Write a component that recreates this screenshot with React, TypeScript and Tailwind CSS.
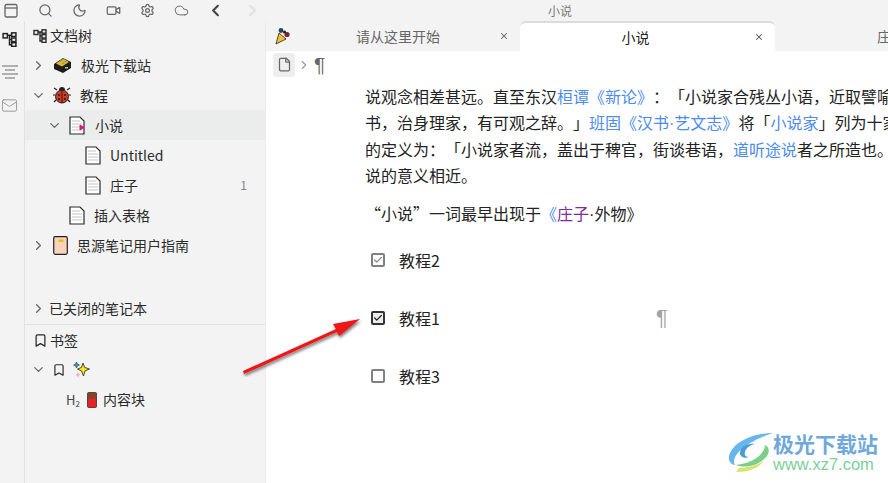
import React from 'react';
import { Search, Moon, Video, Settings, Cloud, ChevronLeft, ChevronRight, ChevronDown, Bookmark, X, Mail, Check, File } from 'lucide-react';

const Tree = ({ size = 14 }: { size?: number }) => (
  <svg width={size} height={size} viewBox="0 0 14 14" fill="none" stroke="currentColor" strokeWidth="1.4">
    <rect x="1" y="1.5" width="4" height="4" />
    <rect x="9" y="0.8" width="4" height="3.4" />
    <rect x="9" y="5.6" width="4" height="3.4" />
    <rect x="9" y="10" width="4" height="3.4" />
    <path d="M5 3h4M7 3v9h2M7 7h2" />
  </svg>
);

const Outline = () => (
  <svg width="16" height="16" viewBox="0 0 16 16" stroke="#9a9a9a" strokeWidth="1.3">
    <path d="M0 2h16M3 6h10M0 10h16M3 14h10" />
  </svg>
);

const CalendarIcon = () => (
  <svg width="14" height="15" viewBox="0 0 14 15" fill="none" stroke="#666" strokeWidth="1.3">
    <rect x="1" y="1.5" width="12" height="12.5" rx="1.5" />
    <path d="M1 5h12" />
  </svg>
);

const DocIcon = ({ mark }: { mark?: boolean }) => (
  <svg width="16" height="19" viewBox="0 0 16 19">
    <path d="M1 1h10l4 4v13H1z" fill="#fff" stroke="#2b2b2b" strokeWidth="1.2" />
    <path d="M3 5h8M3 8h10M3 11h10M3 14h10" stroke="#c4c4c4" strokeWidth="1.2" />
    {mark && <path d="M11 9l4 2.5-4 2.5z" fill="#e0157d" stroke="#e0157d" />}
  </svg>
);

const BoxIcon = () => (
  <svg width="19" height="18" viewBox="0 0 19 18">
    <path d="M1 8l9-6 8 4v6l-8 5-9-4z" fill="#1d1d1d" />
    <path d="M3 7.5l7-5 6 3.5-7 4.5z" fill="#f0b52a" />
    <path d="M6 6l5-3M9 8l4-3" stroke="#5aa85a" strokeWidth="1" />
    <rect x="12" y="11" width="3" height="1.5" fill="#bbb" />
  </svg>
);

const BugIcon = () => (
  <svg width="18" height="18" viewBox="0 0 18 18">
    <path d="M4 4L1 2M14 4l3-2M2 9H0M16 9h2M3 14l-2 2M15 14l2 2" stroke="#222" strokeWidth="1.2" />
    <circle cx="9" cy="4" r="3" fill="#222" />
    <ellipse cx="9" cy="10.5" rx="6.5" ry="6.5" fill="#d63a1e" stroke="#222" />
    <path d="M9 4v13" stroke="#222" />
    <circle cx="6" cy="9" r="1.1" fill="#222" />
    <circle cx="12" cy="9" r="1.1" fill="#222" />
    <circle cx="6" cy="13" r="1.1" fill="#222" />
    <circle cx="12" cy="13" r="1.1" fill="#222" />
  </svg>
);

const BookIcon = () => (
  <svg width="15" height="19" viewBox="0 0 15 19">
    <rect x="0.7" y="0.7" width="13.6" height="17.6" rx="1.5" fill="#f7d3bb" stroke="#222" strokeWidth="1.2" />
    <rect x="5.5" y="3.5" width="5" height="2.5" rx="1" fill="#e9bf1c" />
  </svg>
);

const SparkleIcon = () => (
  <svg width="17" height="17" viewBox="0 0 17 17">
    <path d="M10 2l1.6 4.4L16.5 8l-4.4 1.8L10.5 15l-2-5L4.5 8l4-1.6z" fill="#f8e71c" stroke="#222" strokeWidth="0.8" />
    <path d="M3.5 1l1 2 2 1-2 1-1 2-1-2-2-1 2-1z" fill="#2d9fc4" stroke="#222" strokeWidth="0.5" />
    <path d="M5 11l.8 2 1.7.8-1.7.8L5 17l-.8-2.4-1.7-.8 1.7-.8z" fill="#f4a3c0" />
  </svg>
);

const ChocoIcon = () => (
  <svg width="10" height="16" viewBox="0 0 10 16">
    <rect x="0.5" y="0.5" width="9" height="15" rx="1" fill="#e8202a" stroke="#222" strokeWidth="0.7" />
    <path d="M1 1h8v5L1 7z" fill="#7a4a2a" />
  </svg>
);

const PopperIcon = () => (
  <svg width="16" height="18" viewBox="0 0 16 18">
    <path d="M1 17l3-11 7 6z" fill="#f2c230" stroke="#222" strokeWidth="0.8" />
    <circle cx="6" cy="3.5" r="2.4" fill="#1f4a5e" />
    <circle cx="12" cy="7.5" r="2.6" fill="#7a2230" />
    <circle cx="9.5" cy="5" r="1.6" fill="#222" />
  </svg>
);

const Arrow = () => (
  <svg className="absolute left-[240px] top-[315px]" width="125" height="62" viewBox="0 0 125 62">
    <defs>
      <filter id="arrowShadow" x="-20%" y="-30%" width="140%" height="170%">
        <feDropShadow dx="1" dy="2" stdDeviation="1.5" floodColor="#000" floodOpacity="0.55" />
      </filter>
    </defs>
    <path d="M3 56L96 14l-3-5 27-5-21 17-2-4L4 59z" fill="#ee1414" filter="url(#arrowShadow)" />
  </svg>
);

const Watermark = () => (
  <div className="absolute left-[728px] top-[431px] flex items-center">
    <svg width="45" height="42" viewBox="0 0 45 42" fill="none">
      <path d="M45 2C28 2 8 9 2 22c-3 6 0 11 5 12C2 26 16 11 45 2z" fill="#67b7ea" />
      <path d="M8 34c10 4 24 0 31-9 3-5 2-9-2-11 0 7-9 18-29 20z" fill="#7ccf8a" />
      <path d="M8 41c11 0 22-3 28-11-7 4-16 7-25 7z" fill="#d9e36b" />
      <path d="M27 13c-8-1-15 3-15 9 0 4 5 6 9 4-3 0-5-2-4-5 1-4 5-7 10-8z" fill="#4a9ed8" />
    </svg>
    <div className="flex flex-col">
      <span className="text-[21px] leading-[24px] font-bold text-[#6fa8dc]">极光下载站</span>
      <span className="text-[16.5px] leading-[18px] [font-family:'Liberation_Sans',sans-serif] text-[#7ccf9a]">www.xz7.com</span>
    </div>
  </div>
);

const Row = ({ indent, open, arrow = true, icon, label, badge, active, gap = 'gap-[11px]' }: { indent: number; open?: boolean; arrow?: boolean; icon: React.ReactNode; label: string; badge?: string; active?: boolean; gap?: string }) => (
  <div className={`flex h-[30px] items-center pr-[18px] ${active ? 'bg-[#ebecec]' : ''}`} style={{ paddingLeft: indent }}>
    <span className="flex w-[18px] shrink-0 justify-center text-[#6b6b6b]">
      {arrow && (open ? <ChevronDown size={15} strokeWidth={2.2} /> : <ChevronRight size={15} strokeWidth={2.2} />)}
    </span>
    <span className={`ml-[6px] flex items-center ${gap}`}>
      {icon}
      <span>{label}</span>
    </span>
    {badge && <span className="ml-auto text-[12px] text-[#7d8590]">{badge}</span>}
  </div>
);

const Pilcrow = ({ className }: { className: string }) => (
  <span className={`leading-none [font-family:'Liberation_Sans',sans-serif] ${className}`}>¶</span>
);

const Task = ({ checked, strong, label, mark }: { checked?: boolean; strong?: boolean; label: string; mark?: boolean }) => (
  <div className="flex h-[58px] items-center">
    <span className={`ml-[6px] flex h-[14px] w-[14px] items-center justify-center rounded-[2px] border-2 ${strong ? 'border-[#333] bg-[#ececec]' : 'border-[#808080]'}`}>
      {checked && <Check size={10} strokeWidth={3} className={strong ? 'text-[#222]' : 'text-[#888]'} />}
    </span>
    <span className="ml-[14px]">{label}</span>
    {mark && <Pilcrow className="ml-[216px] text-[22px] text-[#a3a3a3]" />}
  </div>
);

const A = ({ children }: { children: React.ReactNode }) => <span className="text-[#4d8bf0]">{children}</span>;
const Dot = () => <span className="[font-family:'Liberation_Sans',sans-serif]">·</span>;

export default function App() {
  return (
    <div className="relative flex h-[483px] w-[888px] flex-col overflow-hidden bg-[#f3f3f3] text-[#222] [font-family:'Noto_Sans_CJK_SC','Liberation_Sans',sans-serif]">
      <div className="relative flex h-[21px] shrink-0 items-center text-[#666]">
        <div className="flex w-[22px] justify-center"><CalendarIcon /></div>
        <div className="flex items-center gap-[19px] pl-[16px]">
          <Search size={15} strokeWidth={2} />
          <Moon size={15} strokeWidth={2} />
          <Video size={15} strokeWidth={2} />
          <Settings size={15} strokeWidth={2} />
          <Cloud size={15} strokeWidth={1.5} />
          <ChevronLeft size={19} strokeWidth={2.6} className="-ml-[2px] text-[#444]" />
          <ChevronRight size={19} strokeWidth={2.6} className="-ml-[1px] text-[#e2e2e2]" />
        </div>
        <span className="absolute left-[548px] text-[12px] text-[#777]">小说</span>
      </div>

      <div className="flex min-h-0 flex-1">
        <div className="flex w-[25px] shrink-0 flex-col items-center gap-[17px] border-r border-[#e2e2e2] pt-[11px] pr-[5px]">
          <span className="text-[#222]"><Tree size={15} /></span>
          <Outline />
          <Mail size={17} strokeWidth={1.4} className="text-[#9a9a9a]" />
        </div>

        <div className="flex w-[241px] shrink-0 flex-col border-r border-[#ececec] text-[14px] text-[#2b2b2b]">
          <div className="flex h-[29px] shrink-0 items-center gap-[3px] pl-[8px]">
            <Tree />
            <span>文档树</span>
          </div>
          <Row indent={4} icon={<BoxIcon />} label="极光下载站" gap="gap-[9px]" />
          <Row indent={4} open icon={<BugIcon />} label="教程" gap="gap-[9px]" />
          <Row indent={20} open active icon={<DocIcon mark />} label="小说" gap="gap-[10px]" />
          <Row indent={36} arrow={false} icon={<DocIcon />} label="Untitled" gap="gap-[9px]" />
          <Row indent={36} arrow={false} icon={<DocIcon />} label="庄子" badge="1" gap="gap-[9px]" />
          <Row indent={20} arrow={false} icon={<DocIcon />} label="插入表格" gap="gap-[9px]" />
          <Row indent={4} icon={<BookIcon />} label="思源笔记用户指南" gap="gap-[9px]" />
          <div className="h-[34px] shrink-0" />
          <div className="flex h-[31px] shrink-0 items-center gap-[2px] border-b border-[#e2e2e2] pb-[1px] pl-[4px]">
            <span className="flex w-[18px] justify-center text-[#6b6b6b]"><ChevronRight size={15} strokeWidth={2.2} /></span>
            <span>已关闭的笔记本</span>
          </div>
          <div className="flex h-[30px] shrink-0 items-center gap-[2px] pl-[8px]">
            <Bookmark size={15} strokeWidth={2} />
            <span>书签</span>
          </div>
          <div className="flex h-[29px] shrink-0 items-center pl-[4px]">
            <span className="flex w-[18px] justify-center text-[#6b6b6b]"><ChevronDown size={15} strokeWidth={2.2} /></span>
            <Bookmark size={14} strokeWidth={2} className="ml-[5px]" />
            <span className="ml-[7px]"><SparkleIcon /></span>
          </div>
          <div className="flex h-[31px] shrink-0 items-center pl-[41px]">
            <span className="text-[13px] text-[#444]">H<sub className="text-[8px]">2</sub></span>
            <span className="ml-[7px]"><ChocoIcon /></span>
            <span className="ml-[6px]">内容块</span>
          </div>
        </div>

        <div className="flex min-w-0 flex-1 flex-col">
          <div className="flex h-[30px] shrink-0 items-stretch whitespace-nowrap text-[14px] text-[#666]">
            <div className="relative flex w-[254px] shrink-0 items-center justify-center">
              <span className="absolute left-[9px]"><PopperIcon /></span>
              <span className="ml-[10px]">请从这里开始</span>
              <X size={10} strokeWidth={2.5} className="absolute right-[11px]" />
            </div>
            <div className="relative flex w-[255px] shrink-0 items-center justify-center rounded-t-[6px] border-t-2 border-[#dcdcdc] bg-white text-[#222]">
              <span className="mr-[24px]">小说</span>
              <X size={10} strokeWidth={2.5} className="absolute right-[11px] text-[#555]" />
            </div>
            <div className="flex flex-1 items-center overflow-hidden pl-[102px]">庄</div>
          </div>

          <div className="min-h-0 flex-1 bg-white text-[16px] [text-spacing-trim:space-all]">
            <div className="flex h-[27px] items-center pl-[7px] text-[#666]">
              <span className="flex h-[24px] w-[22px] items-center justify-center rounded-[3px] bg-[#eeeeee]"><File size={15} strokeWidth={2} /></span>
              <ChevronRight size={14} className="ml-[2px] text-[#999]" />
              <Pilcrow className="ml-[3px] text-[21px]" />
            </div>
            <div className="pl-[99px] whitespace-nowrap">
              <div className="mt-[5px] overflow-hidden text-[#222] [&>p]:h-[26.4px] [&>p]:leading-[26.4px]">
                <p>说观念相差甚远。直至东汉<A>桓谭《新论》</A>：「小说家合残丛小语，近取譬喻</p>
                <p>书，治身理家，有可观之辞。」<A>班固《汉书<Dot />艺文志》</A>将「<A>小说家</A>」列为十家</p>
                <p>的定义为：「小说家者流，盖出于稗官，街谈巷语，<A>道听途说</A>者之所造也。</p>
                <p>说的意义相近。</p>
              </div>
              <p className="mt-[11px] h-[26px] leading-[26px]">“小说”一词最早出现于<span className="text-[#4d8bf0]">《</span><span className="text-[#7b2d9b]">庄子</span><Dot />外物》</p>
              <div className="mt-[5px]">
                <Task checked label="教程2" />
                <Task checked strong label="教程1" mark />
                <Task label="教程3" />
              </div>
            </div>
          </div>
        </div>
      </div>

      <Arrow />
      <Watermark />
    </div>
  );
}
